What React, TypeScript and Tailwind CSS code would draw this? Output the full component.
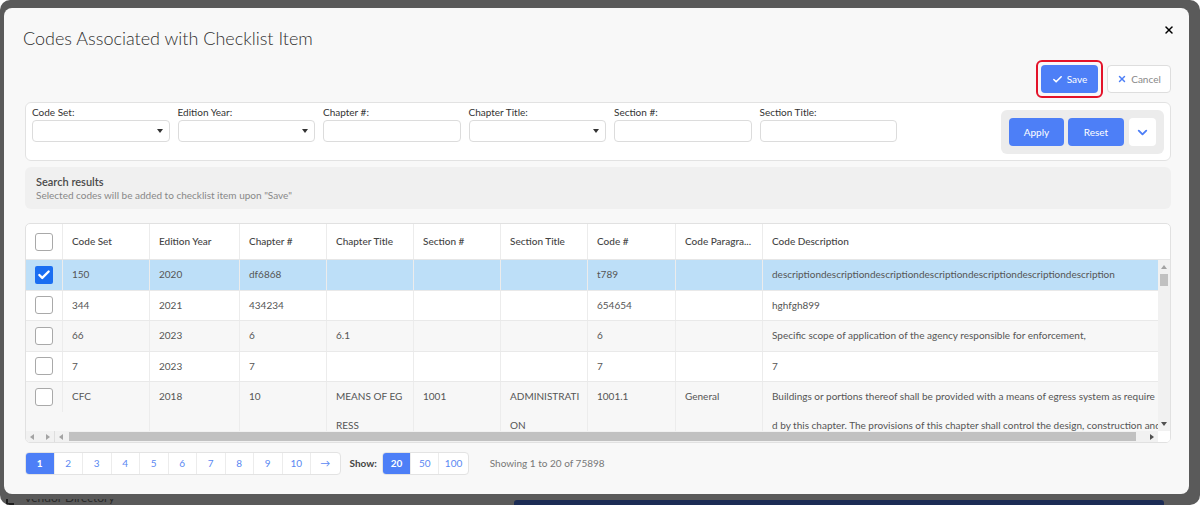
import { Check, X, ChevronDown } from "lucide-react";

type Row = {
  checked?: boolean;
  cells: (string | string[])[];
};

const columns = [
  { label: "Code Set", w: "w-[87px]" },
  { label: "Edition Year", w: "w-[90px]" },
  { label: "Chapter #", w: "w-[87px]" },
  { label: "Chapter Title", w: "w-[87px]" },
  { label: "Section #", w: "w-[87px]" },
  { label: "Section Title", w: "w-[87px]" },
  { label: "Code #", w: "w-[88px]" },
  { label: "Code Paragra...", w: "w-[87px]" },
  { label: "Code Description", w: "w-[420px]" },
];

const rows: Row[] = [
  {
    checked: true,
    cells: [
      "150",
      "2020",
      "df6868",
      "",
      "",
      "",
      "t789",
      "",
      "descriptiondescriptiondescriptiondescriptiondescriptiondescriptiondescription",
    ],
  },
  { cells: ["344", "2021", "434234", "", "", "", "654654", "", "hghfgh899"] },
  {
    cells: [
      "66",
      "2023",
      "6",
      "6.1",
      "",
      "",
      "6",
      "",
      "Specific scope of application of the agency responsible for enforcement,",
    ],
  },
  { cells: ["7", "2023", "7", "", "", "", "7", "", "7"] },
  {
    cells: [
      "CFC",
      "2018",
      "10",
      ["MEANS OF EG", "RESS"],
      "1001",
      ["ADMINISTRATI", "ON"],
      "1001.1",
      "General",
      [
        "Buildings or portions thereof shall be provided with a means of egress system as require",
        "d by this chapter. The provisions of this chapter shall control the design, construction and arrangement",
      ],
    ],
  },
];

const filters = [
  { label: "Code Set:", select: true },
  { label: "Edition Year:", select: true },
  { label: "Chapter #:", select: false },
  { label: "Chapter Title:", select: true },
  { label: "Section #:", select: false },
  { label: "Section Title:", select: false },
];

function Checkbox({ checked }: { checked?: boolean }) {
  if (checked) {
    return (
      <span className="flex h-[18px] w-[18px] items-center justify-center rounded-[2px] bg-[#1a6ef2]">
        <Check className="h-[14px] w-[14px] text-white" strokeWidth={4} />
      </span>
    );
  }
  return <span className="block h-[18px] w-[18px] rounded-[3px] border border-[#a9a9a9] bg-white" />;
}

function Caret() {
  return <span className="h-0 w-0 border-x-[3px] border-t-[4px] border-x-transparent border-t-[#333]" />;
}

export default function App() {
  return (
    <div className="h-[505px] w-[1200px] overflow-hidden bg-white font-['Lato',sans-serif]">
      <div className="flex h-full w-full flex-col overflow-hidden rounded-[10px] bg-[#5a5a5a] pl-[4px] pr-[11px] pt-[8px]">
        <div className="flex h-[486px] w-[1185px] shrink-0 flex-col rounded-[8px] bg-[#f8f8f8] pl-[21px] pr-[18px]">
          {/* header */}
          <div className="flex h-[52px] items-start justify-between pt-[16px]">
            <h2 className="-ml-[2px] mt-[5px] text-[18px] font-light leading-none text-[#2e2e2e]">
              Codes Associated with Checklist Item
            </h2>
            <X className="-mr-[4px] h-[12px] w-[12px] text-black" strokeWidth={3} />
          </div>

          {/* save / cancel */}
          <div className="flex justify-end gap-[4px]">
            <div className="rounded-[6px] border-2 border-[#e3132a] p-[3px]">
              <button className="flex h-[28px] w-[57px] items-center justify-center gap-[4px] rounded-[4px] bg-[#4d7ff7] text-[10px] text-white">
                <Check className="h-[11px] w-[11px]" strokeWidth={3.5} />
                Save
              </button>
            </div>
            <div className="pt-[5px]">
              <button className="flex h-[28px] w-[64px] items-center justify-center gap-[4px] rounded-[4px] border border-[#dedede] bg-white text-[10px] text-[#888]">
                <X className="h-[10px] w-[10px] text-[#4d7ff7]" strokeWidth={3.5} />
                Cancel
              </button>
            </div>
          </div>

          {/* filter panel */}
          <div className="mt-[4px] flex h-[59px] items-start justify-between rounded-[6px] border border-[#e2e2e2] bg-white pl-[6px] pr-[6px]">
            <div className="flex gap-[8px] pt-[3px]">
              {filters.map((f) => (
                <div key={f.label} className="flex w-[137.5px] flex-col gap-[2px]">
                  <span className="text-[10px] leading-[12px] text-[#333]">{f.label}</span>
                  <div className="flex h-[22px] items-center justify-end rounded-[4px] border border-[#dcdcdc] bg-white pr-[6px]">
                    {f.select ? <Caret /> : null}
                  </div>
                </div>
              ))}
            </div>
            <div className="mt-[7px] flex h-[44px] items-center gap-[4px] rounded-[6px] bg-[#ececec] px-[8px]">
              <button className="h-[28px] w-[55px] rounded-[4px] bg-[#4d7ff7] text-[10px] text-white">Apply</button>
              <button className="h-[28px] w-[56px] rounded-[4px] bg-[#4d7ff7] text-[10px] text-white">Reset</button>
              <button className="ml-[1px] flex h-[28px] w-[27px] items-center justify-center rounded-[4px] bg-white">
                <ChevronDown className="h-[15px] w-[15px] text-[#4d7ff7]" strokeWidth={3} />
              </button>
            </div>
          </div>

          {/* search results */}
          <div className="mt-[6px] flex h-[42px] flex-col justify-center rounded-[6px] bg-[#f0f0f0] px-[11px]">
            <span className="text-[11px] font-semibold leading-[14px] text-[#4a4a4a]">Search results</span>
            <span className="text-[10px] leading-[12px] text-[#888]">
              Selected codes will be added to checklist item upon "Save"
            </span>
          </div>

          {/* table */}
          <div className="mt-[14px] flex h-[220px] flex-col overflow-hidden rounded-[5px] border border-[#e1e1e1] bg-white">
            <div className="flex h-[36px] shrink-0 border-b border-[#e6e6e6] text-[10px] text-[#444]">
              <div className="flex w-[37px] shrink-0 items-center justify-center border-r border-[#ececec]">
                <Checkbox />
              </div>
              {columns.map((c) => (
                <div
                  key={c.label}
                  className={`${c.w} flex shrink-0 items-center border-r border-[#ececec] px-[9px] font-medium last:border-r-0`}
                >
                  {c.label}
                </div>
              ))}
            </div>
            <div className="flex h-[171px] shrink-0">
              <div className="w-[1132px] overflow-hidden">
                {rows.map((r, i) => (
                  <div
                    key={i}
                    className={`flex border-b border-[#e9e9e9] text-[10px] text-[#555] ${
                      r.checked ? "bg-[#bddff8]" : i % 2 === 0 ? "bg-[#f7f7f7]" : "bg-white"
                    }`}
                  >
                    <div className="flex h-[29.5px] w-[37px] shrink-0 items-center justify-center border-r border-[#ececec]">
                      <Checkbox checked={r.checked} />
                    </div>
                    {r.cells.map((cell, j) => (
                      <div
                        key={j}
                        className={`${columns[j].w} shrink-0 whitespace-nowrap border-r border-[#ececec] px-[9px] leading-[29.5px]`}
                      >
                        {Array.isArray(cell)
                          ? cell.map((line) => (
                              <div key={line} className="leading-[29px]">
                                {line}
                              </div>
                            ))
                          : cell}
                      </div>
                    ))}
                  </div>
                ))}
              </div>
              {/* vertical scrollbar */}
              <div className="flex w-[12px] shrink-0 flex-col items-center bg-[#f1f1f1] pt-[5px]">
                <span className="h-0 w-0 border-x-[3px] border-b-[4px] border-x-transparent border-b-[#a3a3a3]" />
                <span className="mt-[5px] h-[12px] w-[8px] bg-[#c1c1c1]" />
                <span className="mt-auto mb-[5px] h-0 w-0 border-x-[3px] border-t-[4px] border-x-transparent border-t-[#505050]" />
              </div>
            </div>
            {/* horizontal scrollbar */}
            <div className="flex h-[11px] shrink-0 items-center bg-[#f1f1f1]">
              <div className="flex w-[26px] items-center justify-between pl-[4px] pr-[2px]">
                <span className="h-0 w-0 border-y-[3px] border-r-[4px] border-y-transparent border-r-[#a3a3a3]" />
                <span className="h-0 w-0 border-y-[3px] border-l-[4px] border-y-transparent border-l-[#a3a3a3]" />
              </div>
              <span className="ml-[2px] h-full w-px bg-[#dedede]" />
              <span className="ml-[4px] h-0 w-0 border-y-[3px] border-r-[4px] border-y-transparent border-r-[#a3a3a3]" />
              <span className="ml-[6px] h-[9px] w-[1067px] bg-[#c1c1c1]" />
              <span className="ml-[14px] h-0 w-0 border-y-[3px] border-l-[4px] border-y-transparent border-l-[#505050]" />
              <span className="ml-auto h-full w-[12px] bg-white" />
            </div>
          </div>

          {/* pagination */}
          <div className="mt-[9px] flex items-center text-[10px]">
            <div className="flex h-[23px] overflow-hidden rounded-[4px] border border-[#e3e3e3] bg-white">
              {["1", "2", "3", "4", "5", "6", "7", "8", "9", "10", "→"].map((p, i) => (
                <span
                  key={p}
                  className={`flex w-[28.5px] items-center justify-center border-r border-[#ececec] last:border-r-0 ${
                    i === 0 ? "bg-[#4d7ff7] font-bold text-white" : "text-[#5a88f2]"
                  }`}
                >
                  {p}
                </span>
              ))}
            </div>
            <span className="ml-[9px] font-bold text-[#444]">Show:</span>
            <div className="ml-[5px] flex h-[23px] overflow-hidden rounded-[4px] border border-[#e3e3e3] bg-white">
              {["20", "50", "100"].map((p, i) => (
                <span
                  key={p}
                  className={`flex w-[28.3px] items-center justify-center border-r border-[#ececec] last:border-r-0 ${
                    i === 0 ? "bg-[#4d7ff7] font-bold text-white" : "text-[#5a88f2]"
                  }`}
                >
                  {p}
                </span>
              ))}
            </div>
            <span className="ml-[21px] text-[#777]">Showing 1 to 20 of 75898</span>
          </div>
        </div>

        {/* page behind the overlay */}
        <div className="flex h-[11px] shrink-0 items-end">
          <div className="flex w-[150px] items-start gap-[10px] overflow-hidden pl-[2px]">
            <span className="mt-[-2px] h-[8px] w-[8px] border-b-2 border-l-2 border-[#1e1e1e]" />
            <span className="-mt-[8px] text-[12px] leading-[14px] text-[#2a2a2a]">Vendor Directory</span>
          </div>
          <div className="ml-[360px] h-[5px] w-[650px] rounded-t-[3px] bg-[#1c2c55]" />
        </div>
      </div>
    </div>
  );
}
